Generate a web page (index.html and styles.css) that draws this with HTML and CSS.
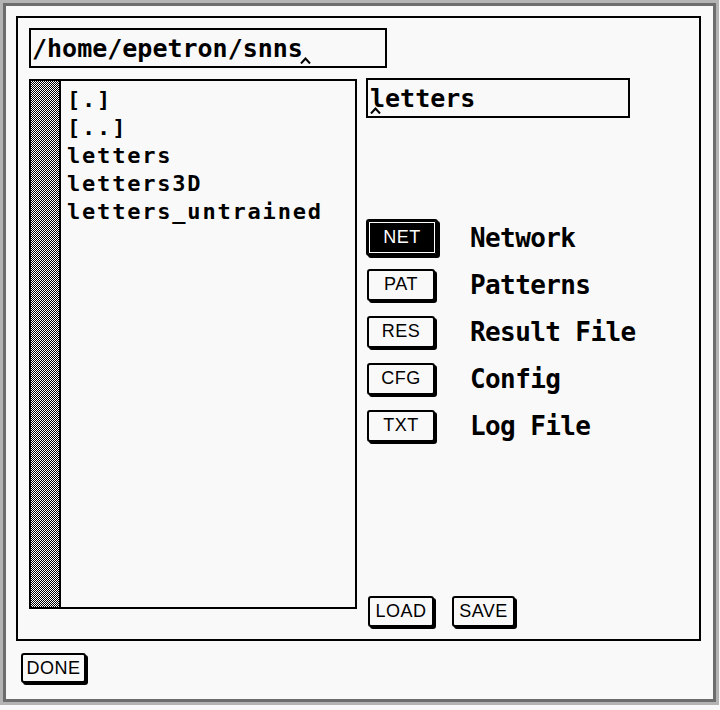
FILE: index.html
```html
<!DOCTYPE html>
<html>
<head>
<meta charset="utf-8">
<link rel="stylesheet" href="styles.css">
</head>
<body>
<div class="win">
  <div class="win-in">
    <div class="panel">
      <div class="field path"><span class="ftext">/home/epetron/snns<span class="anchor anchor-end"><svg class="caret" width="11" height="7" viewBox="0 0 11 7"><polyline points="1,6.5 5.5,1.5 10,6.5" fill="none" stroke="#000" stroke-width="2"/></svg></span></span></div>
      <div class="main">
        <div class="list">
          <div class="scroll"></div>
          <div class="items">
            <div class="item">[.]</div>
            <div class="item">[..]</div>
            <div class="item">letters</div>
            <div class="item">letters3D</div>
            <div class="item">letters_untrained</div>
          </div>
        </div>
        <div class="side">
          <div class="field name"><span class="ftext"><span class="anchor"><svg class="caret" width="11" height="7" viewBox="0 0 11 7"><polyline points="1,6.5 5.5,1.5 10,6.5" fill="none" stroke="#000" stroke-width="2"/></svg></span>letters</span></div>
          <div class="types">
            <div class="row"><div class="cell"><div class="btn btn-type sel">NET</div></div><span class="label">Network</span></div>
            <div class="row"><div class="cell"><div class="btn btn-type">PAT</div></div><span class="label">Patterns</span></div>
            <div class="row"><div class="cell"><div class="btn btn-type">RES</div></div><span class="label">Result File</span></div>
            <div class="row"><div class="cell"><div class="btn btn-type">CFG</div></div><span class="label">Config</span></div>
            <div class="row"><div class="cell"><div class="btn btn-type">TXT</div></div><span class="label">Log File</span></div>
          </div>
          <div class="actions">
            <div class="btn btn-load">LOAD</div>
            <div class="btn btn-save">SAVE</div>
          </div>
        </div>
      </div>
    </div>
    <div class="done-bar"><div class="btn btn-done">DONE</div></div>
  </div>
</div>
</body>
</html>
```
FILE: styles.css
```css
html, body {
  margin: 0;
  padding: 0;
  background: #f9f9f9;
}
.win {
  width: 719px;
  height: 705px;
  box-sizing: border-box;
  border: 3px solid #b4b4b4;
}
.win-in {
  height: 100%;
  box-sizing: border-box;
  border: 3px solid #6d6d6d;
  padding: 10px 12px 10px 10px;
  background: #f9f9f9;
}
.panel {
  height: 625px;
  box-sizing: border-box;
  border: 2px solid #000;
  padding: 10px 0 0 11px;
}
.field {
  box-sizing: border-box;
  height: 40px;
  border: 2px solid #000;
  display: flex;
  align-items: center;
  padding-left: 2px;
  padding-top: 2px;
  font-family: "DejaVu Sans Mono", monospace;
  font-weight: bold;
  font-size: 25px;
  color: #000;
}
.ftext {
  line-height: 34px;
  white-space: pre;
}
.path {
  width: 358px;
  padding-left: 1px;
}
.name {
  width: 264px;
  margin-top: -1px;
}
.anchor {
  position: relative;
  display: inline-block;
  width: 0;
  height: 0;
}
.caret {
  position: absolute;
  left: 0;
  top: 0;
  display: block;
}
.anchor-end .caret {
  left: -3px;
}
.main {
  display: flex;
  gap: 9px;
  margin-top: 11px;
  height: 548px;
}
.list {
  width: 328px;
  height: 530px;
  box-sizing: border-box;
  border: 2px solid #000;
  display: flex;
}
.scroll {
  width: 28px;
  border-right: 2px solid #000;
  background-color: #fff;
  background-image: conic-gradient(#000 25%, #fff 0 50%, #000 0 75%, #fff 0);
  background-size: 2px 2px;
}
.items {
  padding: 5px 0 0 6px;
}
.item {
  height: 28px;
  line-height: 28px;
  font-family: "DejaVu Sans Mono", monospace;
  font-weight: bold;
  font-size: 22px;
  letter-spacing: 1.8px;
  color: #000;
  white-space: pre;
}
.side {
  display: flex;
  flex-direction: column;
}
.types {
  margin-top: 96px;
}
.row {
  height: 47px;
  display: flex;
  align-items: center;
}
.cell {
  width: 74px;
  display: flex;
  align-items: center;
}
.label {
  margin-left: 30px;
  font-family: "DejaVu Sans Mono", monospace;
  font-weight: bold;
  font-size: 26px;
  letter-spacing: -0.6px;
  color: #000;
  white-space: pre;
}
.btn {
  box-sizing: border-box;
  border: 2px solid #000;
  border-radius: 3px;
  box-shadow: 2px 2px 0 #000;
  background: #f9f9f9;
  display: flex;
  align-items: center;
  justify-content: center;
  font-family: "Liberation Sans", Arial, sans-serif;
  font-size: 18px;
  letter-spacing: 0.5px;
  color: #000;
}
.btn-type {
  width: 68px;
  height: 32px;
  margin-left: 1px;
}
.btn-type.sel {
  width: 72px;
  height: 37px;
  margin-left: 0;
  background: #000;
  color: #fff;
  box-shadow: inset 0 0 0 1px #000, inset 0 0 0 2px #fff, 2px 2px 0 #000;
}
.actions {
  margin-top: auto;
  display: flex;
  gap: 18px;
  padding-left: 2px;
}
.btn-load {
  width: 66px;
  height: 31px;
}
.btn-save {
  width: 63px;
  height: 31px;
}
.done-bar {
  margin-top: 12px;
  padding-left: 5px;
}
.btn-done {
  width: 65px;
  height: 30px;
}
```
